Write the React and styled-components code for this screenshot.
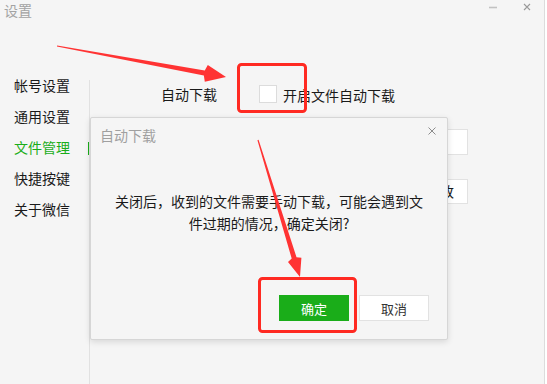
import React from "react";
import styled, { createGlobalStyle } from "styled-components";

const GlobalStyle = createGlobalStyle`
  html, body { margin: 0; padding: 0; background: #ffffff; }
  body { font-family: "Noto Sans CJK SC", "Noto Sans", sans-serif; }
  * { box-sizing: border-box; }
`;

const Window = styled.div`
  position: relative;
  width: 545px;
  height: 384px;
  background: #f5f5f5;
  border-right: 1px solid #dcdcdc;
  display: flex;
  flex-direction: column;
  overflow: visible;
`;

const TitleBar = styled.div`
  height: 30px;
  display: flex;
  align-items: flex-start;
  padding: 0 12px 0 4px;
`;

const Title = styled.div`
  font-size: 14px;
  line-height: 20px;
  color: #a3a3a3;
`;

const WinControls = styled.div`
  margin-left: auto;
  margin-top: 2px;
  display: flex;
  gap: 24px;
`;

const WinButton = styled.div`
  width: 10px;
  height: 10px;
  display: flex;
  align-items: center;
  justify-content: center;
`;

const Body = styled.div`
  flex: 1;
  display: flex;
`;

const Sidebar = styled.div`
  width: 89px;
  padding-top: 40px;
  display: flex;
  flex-direction: column;
`;

const NavItem = styled.div`
  position: relative;
  height: 31px;
  line-height: 31px;
  padding-left: 14px;
  font-size: 14px;
  color: ${(p) => (p.$active ? "#1aad19" : "#1a1a1a")};
  &::after {
    content: "";
    display: ${(p) => (p.$active ? "block" : "none")};
    position: absolute;
    right: 0;
    top: 10px;
    width: 1px;
    height: 13px;
    background: #1aad19;
  }
`;

const Divider = styled.div`
  width: 1px;
  margin-top: 50px;
  background: #e1e1e1;
`;

const Content = styled.div`
  padding: 53px 0 0 71px;
  display: flex;
  flex-direction: column;
  gap: 24px;
`;

const Row = styled.div`
  display: flex;
  align-items: center;
  width: 307px;
  justify-content: ${(p) => (p.$end ? "flex-end" : "flex-start")};
`;

const Label = styled.div`
  width: 98px;
  font-size: 14px;
  line-height: 20px;
  color: #1a1a1a;
`;

const Checkbox = styled.div`
  width: 18px;
  height: 18px;
  background: #ffffff;
  border: 1px solid #dcdcdc;
  margin-right: 6px;
`;

const CheckText = styled.div`
  font-size: 14px;
  line-height: 20px;
  color: #1a1a1a;
  padding-top: 2px;
`;

const PathInput = styled.div`
  width: 209px;
  height: 26px;
  background: #ffffff;
  border: 1px solid #e2e2e2;
`;

const PlainButton = styled.div`
  height: 25px;
  padding: 0 13px 0 20px;
  background: #ffffff;
  border: 1px solid #e2e2e2;
  font-size: 14px;
  line-height: 23px;
  color: #1a1a1a;
`;

const Dialog = styled.div`
  position: absolute;
  left: 90px;
  top: 117px;
  width: 358px;
  height: 223px;
  background: #f5f5f5;
  border: 1px solid #d6d6d6;
  border-radius: 2px;
  box-shadow: 0 2px 6px rgba(0, 0, 0, 0.12);
  display: flex;
  flex-direction: column;
`;

const DialogHeader = styled.div`
  display: flex;
  align-items: flex-start;
  padding: 7px 11px 0 9px;
`;

const DialogTitle = styled.div`
  font-size: 14px;
  line-height: 20px;
  color: #a0a0a0;
`;

const DialogClose = styled.div`
  margin-left: auto;
  margin-top: 2px;
  width: 8px;
  height: 8px;
  display: flex;
`;

const Message = styled.div`
  margin-top: 45px;
  padding: 0 21px;
  text-align: center;
  font-size: 14px;
  line-height: 22px;
  color: #1a1a1a;
`;

const Footer = styled.div`
  margin-top: auto;
  padding: 0 18px 18px;
  display: flex;
  justify-content: flex-end;
  gap: 10px;
`;

const DialogButton = styled.div`
  width: 70px;
  height: 26px;
  display: flex;
  align-items: center;
  justify-content: center;
  font-size: 13px;
  background: ${(p) => (p.$primary ? "#1aad19" : "#ffffff")};
  color: ${(p) => (p.$primary ? "#ffffff" : "#333333")};
  border: 1px solid ${(p) => (p.$primary ? "#1aad19" : "#e2e2e2")};
`;

const Annotations = styled.svg`
  position: absolute;
  left: 0;
  top: 0;
  width: 547px;
  height: 384px;
  pointer-events: none;
`;

const RED = "#ff2a22";

export default function App() {
  const nav = ["帐号设置", "通用设置", "文件管理", "快捷按键", "关于微信"];
  return (
    <>
      <GlobalStyle />
      <Window>
        <TitleBar>
          <Title>设置</Title>
          <WinControls>
            <WinButton>
              <svg width="10" height="10" viewBox="0 0 10 10">
                <line x1="1" y1="5.5" x2="9" y2="5.5" stroke="#c2c2c2" strokeWidth="1.6" />
              </svg>
            </WinButton>
            <WinButton>
              <svg width="10" height="10" viewBox="0 0 10 10">
                <path d="M2 2 L8 8 M8 2 L2 8" stroke="#9a9a9a" strokeWidth="1.1" fill="none" />
              </svg>
            </WinButton>
          </WinControls>
        </TitleBar>
        <Body>
          <Sidebar>
            {nav.map((n) => (
              <NavItem key={n} $active={n === "文件管理"}>
                {n}
              </NavItem>
            ))}
          </Sidebar>
          <Divider />
          <Content>
            <Row>
              <Label>自动下载</Label>
              <Checkbox />
              <CheckText>开启文件自动下载</CheckText>
            </Row>
            <Row>
              <Label>文件管理</Label>
              <PathInput />
            </Row>
            <Row $end>
              <PlainButton>更改</PlainButton>
            </Row>
          </Content>
        </Body>

        <Dialog>
          <DialogHeader>
            <DialogTitle>自动下载</DialogTitle>
            <DialogClose>
              <svg width="8" height="8" viewBox="0 0 8 8">
                <path d="M0.5 0.5 L7.5 7.5 M7.5 0.5 L0.5 7.5" stroke="#8c8c8c" strokeWidth="1" fill="none" />
              </svg>
            </DialogClose>
          </DialogHeader>
          <Message>关闭后，收到的文件需要手动下载，可能会遇到文件过期的情况，确定关闭?</Message>
          <Footer>
            <DialogButton $primary>确定</DialogButton>
            <DialogButton>取消</DialogButton>
          </Footer>
        </Dialog>

        <Annotations viewBox="0 0 547 384">
          <rect x="238.5" y="64.5" width="67" height="47" rx="3" fill="none" stroke={RED} strokeWidth="3" />
          <rect x="259.5" y="278.5" width="96" height="53" rx="3" fill="none" stroke={RED} strokeWidth="3" />
          <polygon
            fill="#ff3333"
            points="57.1,45.4 204.75,70.54 207.8,65 226,77 204.8,81.8 203.85,75.46 56.9,46.6"
          />
          <polygon
            fill="#ff3333"
            points="258.57,139.82 296.5,257.2 301.4,257.8 300,277 288,261.9 291.7,258.6 257.43,140.18"
          />
        </Annotations>
      </Window>
    </>
  );
}
